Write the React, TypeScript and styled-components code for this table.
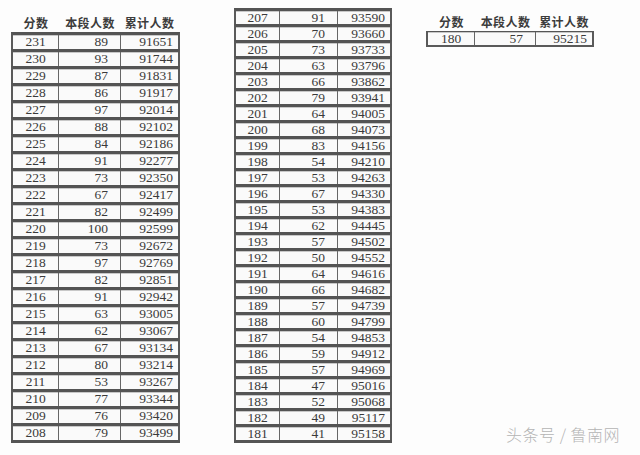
import React from "react";
import styled, {createGlobalStyle} from "styled-components";

type Score = [number, number, number];

const leftRows: Score[] = [
    [231, 89, 91651], [230, 93, 91744], [229, 87, 91831], [228, 86, 91917],
    [227, 97, 92014], [226, 88, 92102], [225, 84, 92186], [224, 91, 92277],
    [223, 73, 92350], [222, 67, 92417], [221, 82, 92499], [220, 100, 92599],
    [219, 73, 92672], [218, 97, 92769], [217, 82, 92851], [216, 91, 92942],
    [215, 63, 93005], [214, 62, 93067], [213, 67, 93134], [212, 80, 93214],
    [211, 53, 93267], [210, 77, 93344], [209, 76, 93420], [208, 79, 93499],
];

const middleRows: Score[] = [
    [207, 91, 93590], [206, 70, 93660], [205, 73, 93733], [204, 63, 93796],
    [203, 66, 93862], [202, 79, 93941], [201, 64, 94005], [200, 68, 94073],
    [199, 83, 94156], [198, 54, 94210], [197, 53, 94263], [196, 67, 94330],
    [195, 53, 94383], [194, 62, 94445], [193, 57, 94502], [192, 50, 94552],
    [191, 64, 94616], [190, 66, 94682], [189, 57, 94739], [188, 60, 94799],
    [187, 54, 94853], [186, 59, 94912], [185, 57, 94969], [184, 47, 95016],
    [183, 52, 95068], [182, 49, 95117], [181, 41, 95158],
];

const rightRows: Score[] = [[180, 57, 95215]];

interface ITableProps {
    rows: Score[];
    cols: [number, number, number];
    rowHeight: number;
    top: number;
    left: number;
    header?: boolean;
    thin?: boolean;
}

const ScoreTable = (props: ITableProps) => {
    const {rows, cols, rowHeight, top, left, header, thin} = props;
    return (
        <TableWrapper $top={top} $left={left}>
            {header && (
                <HeaderRow>
                    <HeaderCell $w={cols[0]}>分数</HeaderCell>
                    <HeaderCell $w={cols[1]}>本段人数</HeaderCell>
                    <HeaderCell $w={cols[2]}>累计人数</HeaderCell>
                </HeaderRow>
            )}
            <Body $thin={thin}>
                {rows.map(r => (
                    <Row key={r[0]} $h={rowHeight} $thin={thin}>
                        <ScoreCell $w={cols[0]}>{r[0]}</ScoreCell>
                        <CountCell $w={cols[1]}>{r[1]}</CountCell>
                        <TotalCell $w={cols[2]}>{r[2]}</TotalCell>
                    </Row>
                ))}
            </Body>
        </TableWrapper>
    )
}

const App = () => {
    return (
        <Page>
            <GlobalStyle/>
            <ScoreTable rows={leftRows} cols={[46, 62, 57]} rowHeight={17} top={13} left={11} header/>
            <ScoreTable rows={middleRows} cols={[44, 58, 52]} rowHeight={16} top={8} left={54}/>
            <ScoreTable rows={rightRows} cols={[47, 61, 56]} rowHeight={14} top={12} left={34} header thin/>
            <Watermark>头条号 / 鲁南网</Watermark>
        </Page>
    )
}

const GlobalStyle = createGlobalStyle`
  html, body {
    margin: 0;
    padding: 0;
    background: #fff;
  }
`

const Page = styled.div`
  position: relative;
  width: 640px;
  height: 455px;
  overflow: hidden;
  display: flex;
  align-items: flex-start;
  background: #fdfdfd;
  font-family: "Liberation Serif", "Noto Sans CJK SC", serif;
  color: #3a3a3a;
`

const TableWrapper = styled.div<{ $top: number; $left: number }>`
  display: flex;
  flex-direction: column;
  margin-top: ${p => p.$top}px;
  margin-left: ${p => p.$left}px;
`

const HeaderRow = styled.div`
  display: flex;
  height: 19px;
  align-items: center;
  padding: 0 2px;
`

const HeaderCell = styled.div<{ $w: number }>`
  width: ${p => p.$w}px;
  text-align: center;
  font-family: "Noto Sans CJK SC", sans-serif;
  font-weight: 700;
  font-size: 12px;
  letter-spacing: 0.4px;
  color: #3c3c3c;
  line-height: 1;
`

const Body = styled.div<{ $thin?: boolean }>`
  display: flex;
  flex-direction: column;
  border-bottom: ${p => p.$thin ? '2px solid #5a5a5a' : '3px solid #555'};
`

const Row = styled.div<{ $h: number; $thin?: boolean }>`
  display: flex;
  box-sizing: border-box;
  height: ${p => p.$h}px;
  border-top: ${p => p.$thin ? '1px solid #555' : '3px solid #545454'};
  border-left: 2px solid #5a5a5a;
  border-right: 2px solid #5a5a5a;
  background: #fafafa;
  box-shadow: inset 0 1px 0 #c8c8c8;
`

const Cell = styled.div<{ $w: number }>`
  box-sizing: border-box;
  width: ${p => p.$w}px;
  font-size: 13.5px;
  line-height: 1;
  display: flex;
  align-items: center;
  color: #3a3a3a;
`

const ScoreCell = styled(Cell)`
  justify-content: center;
  border-right: 1px solid #666;
`

const CountCell = styled(Cell)`
  justify-content: flex-end;
  padding-right: 12px;
  border-right: 1px solid #666;
`

const TotalCell = styled(Cell)`
  justify-content: flex-end;
  padding-right: 5px;
`

const Watermark = styled.div`
  position: absolute;
  right: 20px;
  bottom: 9px;
  font-family: "Noto Sans CJK SC", sans-serif;
  font-size: 16px;
  font-weight: 300;
  color: #b4b4b4;
  letter-spacing: 0.5px;
`

export default App;
